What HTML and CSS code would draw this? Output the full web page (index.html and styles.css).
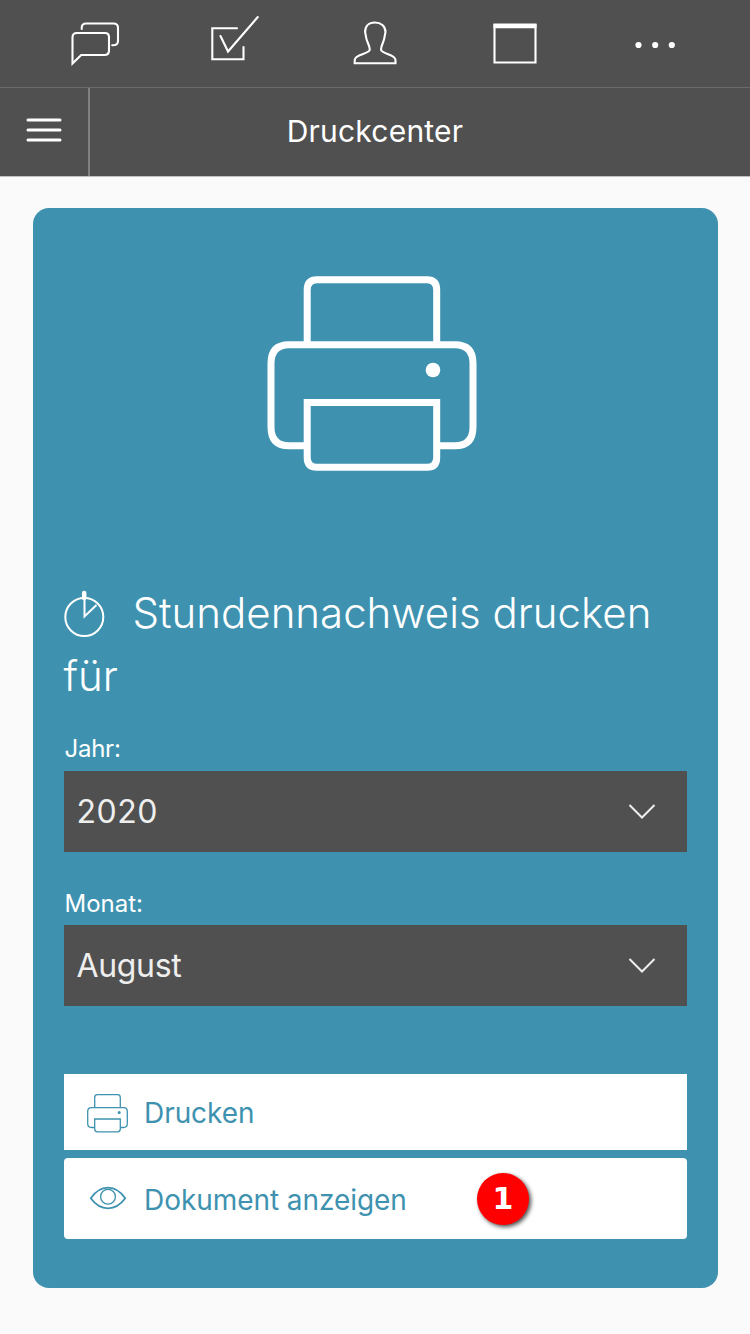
FILE: index.html
```html
<!DOCTYPE html>
<html lang="de">
<head>
<meta charset="utf-8">
<title>Druckcenter</title>
<link rel="stylesheet" href="styles.css">
</head>
<body>
<nav class="tabs">
  <a class="tab"><svg class="tab-icon" viewBox="65 13 60 60"><path d="M81.700 29V28Q81.700 23.500 86 23.500H113.500Q118 23.500 118 28V41Q118 45.300 113 45.300H112.200M76.800 33H105Q109 33 109 37V50.500Q109 55 104.500 55H81.200L72.500 63.500V37.500Q72.500 33 76.800 33Z"/></svg></a>
  <a class="tab"><svg class="tab-icon" viewBox="205 13 60 60"><path d="M237 28.300H212.300V59.300H243.500V47M220.500 36L228 51.500L257.800 17"/></svg></a>
  <a class="tab"><svg class="tab-icon" viewBox="345 13 60 60"><path class="person" d="M354.700 63.300V60C354.700 54 369.800 54 369.800 49.500C369.800 45 366 41 366 36.500L365.100 32C365.100 26 369 22.500 374.900 22.500S385.500 26 385.500 32L384.600 36.500C384.600 41 381 45 381 49.500C381 54 395.500 54 395.500 60V63.300Z"/></svg></a>
  <a class="tab"><svg class="tab-icon" viewBox="485 13 60 60"><path d="M494.500 25H535.500V62.500H494.500Z"/><path class="solid" d="M493.500 23.500H536.500V28.300H493.500Z"/></svg></a>
  <a class="tab"><svg class="tab-icon" viewBox="625 13 60 60"><g class="solid"><circle cx="638.500" cy="45" r="3.100"/><circle cx="655.200" cy="45" r="3.100"/><circle cx="671.800" cy="45" r="3.100"/></g></svg></a>
</nav>
<header class="titlebar">
  <button class="menu" aria-label="Menü"><svg class="menu-icon" viewBox="0 0 36 26"><path d="M2 3H34M2 13H34M2 23H34"/></svg></button>
  <h1 class="page-title">Druckcenter</h1>
</header>
<main class="card">
  <svg class="printer-large" viewBox="267 276 210 195"><path d="M307.200 344.500V290Q307.200 279.800 317 279.800H427Q436.700 279.800 436.700 290V344.500M307 445.800H289Q271 445.800 271 427V363.500Q271 344.800 289 344.800H455Q473 344.800 473 363.500V427Q473 445.800 455 445.800H437M307.200 402.600H436.700V457.500Q436.700 467.300 427 467.300H317Q307.200 467.300 307.200 457.500Z"/><circle class="lamp" cx="433" cy="370" r="7.300"/></svg>
  <h2 class="heading"><svg class="clock" viewBox="64 590 41 47"><circle cx="84.300" cy="617" r="19"/><path d="M84.500 600V616.500L96.500 605"/><path class="knob" d="M84.200 593V598"/></svg><span class="heading-text">Stundennachweis drucken für</span></h2>
  <label class="label">Jahr:</label>
  <div class="select select-year"><span>2020</span><svg class="chevron" viewBox="0 0 28 16"><path d="M1.500 2L14 14.500L26.500 2"/></svg></div>
  <label class="label label-month">Monat:</label>
  <div class="select"><span>August</span><svg class="chevron" viewBox="0 0 28 16"><path d="M1.500 2L14 14.500L26.500 2"/></svg></div>
  <button class="action action-print"><svg class="action-icon" viewBox="86 1091.500 43 41"><path d="M94.700 1107V1097Q94.700 1094.200 97.500 1094.200H117.500Q120.300 1094.200 120.300 1097V1107M94.500 1127H91.500Q87.700 1127 87.700 1123V1111Q87.700 1107.200 91.500 1107.200H123.500Q127.300 1107.200 127.300 1111V1123Q127.300 1127 123.500 1127H120.500M94.700 1118.500H120.300V1128.500Q120.300 1131.300 117.500 1131.300H97.500Q94.700 1131.300 94.700 1128.500Z"/><circle class="dot" cx="119.200" cy="1112" r="1.500"/></svg><span class="action-text">Drucken</span></button>
  <button class="action action-view"><svg class="action-icon" viewBox="86 1178 43 41"><path class="lid" d="M90.800 1198.300Q98 1187.700 108 1187.700T125.200 1198.300Q118 1208.300 108 1208.300T90.800 1198.300Z"/><circle cx="108" cy="1196.700" r="7.400"/></svg><span class="action-text">Dokument anzeigen</span><span class="badge">1</span></button>
</main>
</body>
</html>
```

FILE: styles.css
```css
* { box-sizing: border-box; }
body {
  margin: 0;
  min-height: 1334px;
  background: #fafafa;
  color: #fff;
  font-family: Inter, "Liberation Sans", sans-serif;
}
svg { display: block; flex: none; fill: none; }
button { border: 0; font: inherit; margin: 0; padding: 0; text-align: left; }

.tabs {
  display: grid;
  grid-template-columns: repeat(5, 140px);
  justify-content: center;
  height: 88px;
  padding-top: 13px;
  background: #505050;
  border-bottom: 1px solid #6b6b6b;
}
.tab { display: flex; justify-content: center; }
.tab-icon { width: 60px; height: 60px; stroke: #fff; stroke-width: 2.100; stroke-linecap: round; }
.tab-icon .solid { fill: #fff; stroke: none; }

.titlebar {
  display: grid;
  grid-template-columns: 90px 1fr 90px;
  height: 89px;
  background: #505050;
  border-bottom: 1px solid #c0c0c0;
}
.menu {
  display: flex;
  justify-content: center;
  padding-top: 29px;
  background: none;
  border-right: 2px solid #818181;
}
.menu-icon { width: 36px; height: 26px; stroke: #fff; stroke-width: 3; stroke-linecap: round; }
.page-title {
  margin: 0;
  font-size: 30px;
  font-weight: 400;
  line-height: 87px;
  letter-spacing: 0.200px;
  text-align: center;
}

.card {
  display: flex;
  flex-direction: column;
  width: 685px;
  height: 1080px;
  margin: 30.500px auto 0;
  padding: 68.500px 31px 0;
  border-radius: 16px;
  background: #3e92af;
}
.printer-large {
  width: 210px;
  height: 195px;
  margin-left: 203.500px;
  stroke: #fff;
  stroke-width: 7;
}
.lamp { fill: #fff; stroke: none; }
.heading {
  margin: 110px 0 0;
  font-size: 42px;
  font-weight: 300;
  line-height: 63px;
}
.clock {
  display: inline-block;
  width: 41px;
  height: 47px;
  margin-right: 28px;
  vertical-align: -9px;
  stroke: #fff;
  stroke-width: 2;
}
.knob { stroke-width: 4.500; stroke-linecap: round; }
.label {
  height: 64px;
  padding: 26px 0 0 1px;
  font-size: 24px;
  line-height: 32px;
  letter-spacing: -0.250px;
}
.label-month { height: 73.500px; padding-top: 36px; letter-spacing: 0; }
.select {
  display: flex;
  align-items: center;
  justify-content: space-between;
  height: 80.500px;
  padding: 0 31px 0 13px;
  background: #505050;
  color: #eee;
  font-size: 32px;
  letter-spacing: -0.350px;
}
.select-year { letter-spacing: 0.500px; }
.chevron { width: 28px; height: 16px; stroke: #eee; stroke-width: 2; }
.action {
  position: relative;
  display: flex;
  align-items: center;
  gap: 15px;
  padding-left: 22.500px;
  background: #fff;
  color: #3e92af;
  font-size: 28px;
  letter-spacing: -0.060px;
}
.action-text { padding-top: 3px; }
.action-print { height: 75.500px; margin-top: 68.500px; }
.action-view { height: 81px; margin-top: 8.500px; border-radius: 4px; }
.action-icon { width: 43px; height: 41px; stroke: #3e92af; stroke-width: 1.300; }
.action-print .action-icon { margin-top: 1px; }
.lid { stroke-width: 1.800; }
.dot { fill: #3e92af; stroke: none; }
.badge {
  position: absolute;
  left: 413.500px;
  top: 14.500px;
  width: 52px;
  height: 52px;
  border-radius: 50%;
  background: #f00;
  box-shadow: 2px 2px 4px rgba(0, 0, 0, 0.700);
  color: #fff;
  font: bold 30px/52px "DejaVu Sans", sans-serif;
  text-align: center;
}
```
